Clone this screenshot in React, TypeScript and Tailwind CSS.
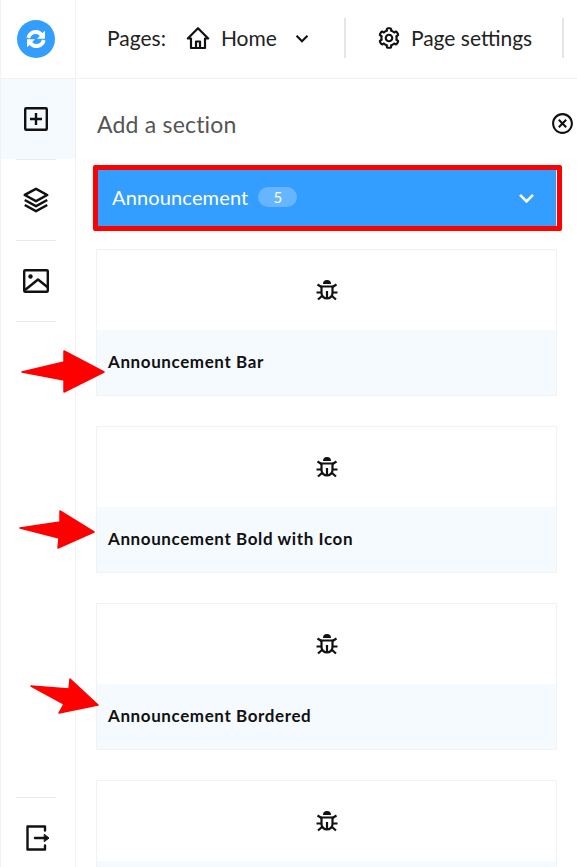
import { BiChevronDown, BiCog, BiLayer, BiXCircle } from "react-icons/bi";

function Logo() {
  return (
    <svg width="38" height="38" viewBox="0 0 38 38">
      <circle cx="19" cy="19" r="19" fill="#339eff" />
      <path d="M9.500 17.500C10.500 12.500 15 9.500 19.500 10c2.600.3 4.600 1.400 6 3l2.500-2.300v8h-8l2.800-2.700c-1-1.200-2.400-1.900-3.800-2-2.800-.2-5 1.300-6 4.500z" fill="#fff" />
      <path d="M28.500 20.500C27.500 25.500 23 28.500 18.500 28c-2.600-.3-4.600-1.400-6-3L10 27.300v-8h8l-2.800 2.700c1 1.200 2.400 1.900 3.800 2 2.800.2 5-1.300 6-4.500z" fill="#fff" />
    </svg>
  );
}

function PlusSquare() {
  return (
    <svg width="24" height="24" viewBox="0 0 24 24" fill="none" stroke="#111" strokeWidth="2.400">
      <rect x="1.200" y="1.200" width="21.600" height="21.600" rx="1" />
      <path d="M12 6v12M6 12h12" />
    </svg>
  );
}

function ImageIcon() {
  return (
    <svg width="26" height="24" viewBox="0 0 26 24" fill="none" stroke="#111" strokeWidth="2.400">
      <rect x="1.200" y="1.200" width="23.600" height="21.600" rx="1" />
      <circle cx="7.500" cy="7.500" r="2.200" fill="#111" stroke="none" />
      <path d="M2 21 L15 10.500 L25 18.500" strokeLinejoin="round" />
    </svg>
  );
}

function ExitIcon() {
  return (
    <svg width="24" height="26" viewBox="0 0 24 26" fill="none" stroke="#111" strokeWidth="2.400" strokeLinecap="round" strokeLinejoin="round">
      <path d="M19 5.500V1.500H1.500V24.500H19V20.500" />
      <path d="M9 13H19" />
      <path d="M18.500 9.500L23 13L18.500 16.500Z" fill="#111" strokeWidth="1" />
    </svg>
  );
}

function HomeIcon() {
  return (
    <svg width="24" height="24" viewBox="0 0 24 24" fill="none" stroke="#111" strokeWidth="2.200" strokeLinejoin="round">
      <path d="M12 2.200L1.800 12.500H5V22H19V12.500H22.200Z" />
      <path d="M10 22V15.500H14V22" />
    </svg>
  );
}

function BugIcon() {
  return (
    <svg width="24" height="24" viewBox="0 0 24 24" fill="none" stroke="#111" strokeWidth="2.200">
      <path d="M8 6a4 4 0 0 1 8 0z" fill="#111" stroke="none" />
      <path d="M6.500 8.500H17.500V15a5.500 5.500 0 0 1-11 0z" />
      <path d="M12 13V21" />
      <path d="M2.500 6.500L6.500 9M21.500 6.500L17.500 9M1.500 14.500H6.500M22.500 14.500H17.500M3 21.500L7 18M21 21.500L17 18" />
    </svg>
  );
}

function Arrow({ className, points }: { className: string; points: string }) {
  return (
    <svg className={className} width="90" height="44" viewBox="0 0 90 44">
      <polygon points={points} fill="#ff0000" stroke="#ff0000" strokeWidth="1.500" strokeLinejoin="round" />
    </svg>
  );
}

function Card({ title }: { title?: string }) {
  return (
    <div className="border border-[#f0f2f5] bg-white shrink-0">
      <div className="h-[80px] flex items-center justify-center">
        <BugIcon />
      </div>
      <div className="h-[65px] bg-[#f5fafe] flex items-center pb-[2px] pl-[11px] text-[17px] tracking-[0.6px] font-bold text-[#111]">
        {title}
      </div>
    </div>
  );
}

function Divider() {
  return <div className="ml-[15px] mr-[19px] border-t border-[#e8eaed]" />;
}

export default function App() {
  return (
    <div className="relative flex h-[867px] w-[577px] overflow-hidden bg-white font-['Lato',sans-serif] text-[#222]">
      <aside className="w-[76px] shrink-0 h-full border-l border-r border-[#f0f2f5] flex flex-col">
        <div className="h-[79px] shrink-0 flex items-center justify-center pr-[4px] border-b border-[#f0f2f5]">
          <Logo />
        </div>
        <div className="h-[80px] shrink-0 bg-[#f5fafe] flex items-center justify-center pr-[4px]">
          <PlusSquare />
        </div>
        <Divider />
        <div className="h-[80px] shrink-0 flex items-center justify-center pr-[4px]">
          <BiLayer className="text-[30px] text-[#111]" />
        </div>
        <Divider />
        <div className="h-[80px] shrink-0 flex items-center justify-center pr-[4px]">
          <ImageIcon />
        </div>
        <Divider />
        <div className="flex-1" />
        <Divider />
        <div className="h-[69px] shrink-0 flex items-center justify-center pr-[1px] pt-[11px]">
          <ExitIcon />
        </div>
      </aside>
      <main className="flex-1 min-w-0 flex flex-col">
        <header className="h-[79px] shrink-0 border-b border-[#f0f2f5] flex items-center pl-[31px] pb-[2px] text-[21px] text-[#222] whitespace-nowrap">
          <span>Pages:</span>
          <span className="ml-[20px]"><HomeIcon /></span>
          <span className="ml-[11px]">Home</span>
          <BiChevronDown className="ml-[12px] text-[26px] text-[#111]" />
          <div className="ml-[29px] h-[40px] w-[2px] bg-[#e5e5e5]" />
          <BiCog className="ml-[30px] text-[26px] text-[#111]" />
          <span className="ml-[9px]">Page settings</span>
          <div className="ml-[30px] h-[40px] w-[2px] bg-[#e5e5e5]" />
        </header>
        <div className="flex-1 min-h-0 pl-[20px] pr-[20px] flex flex-col">
          <div className="h-[86px] shrink-0 flex items-start justify-between">
            <h2 className="mt-[30px] ml-[1px] text-[23px] leading-[30px] tracking-[0.2px] text-[#555]">Add a section</h2>
            <BiXCircle className="mt-[32px] -mr-[18px] text-[25px] text-[#111]" />
          </div>
          <div className="-ml-[3px] w-[469px] h-[66px] shrink-0 border-[5px] border-[#ff0000] rounded-[2px] bg-[#fff] pr-[1px]">
            <div className="h-full bg-[#339eff] flex items-center pl-[14px] pr-[14px] pb-[2px] text-white">
              <span className="text-[20px] tracking-[0.15px]">Announcement</span>
              <span className="ml-[10px] w-[39px] h-[20px] rounded-full bg-[#66b6ff] text-[15px] flex items-center justify-center">5</span>
              <BiChevronDown className="ml-auto text-[31px]" />
            </div>
          </div>
          <div className="mt-[18px] flex flex-col gap-[30px]">
            <Card title="Announcement Bar" />
            <Card title="Announcement Bold with Icon" />
            <Card title="Announcement Bordered" />
            <Card />
          </div>
        </div>
      </main>
      <Arrow className="absolute left-[21px] top-[350px]" points="1,22 43,12 43,1 83,22 43,42 43,30" />
      <Arrow className="absolute left-[19px] top-[510px]" points="1,18 41,12 41,1 75,22 39,38 40,28" />
      <Arrow className="absolute left-[30px] top-[678px]" points="1,8 39,11 40,1 68,27 29,35 34,26" />
    </div>
  );
}
